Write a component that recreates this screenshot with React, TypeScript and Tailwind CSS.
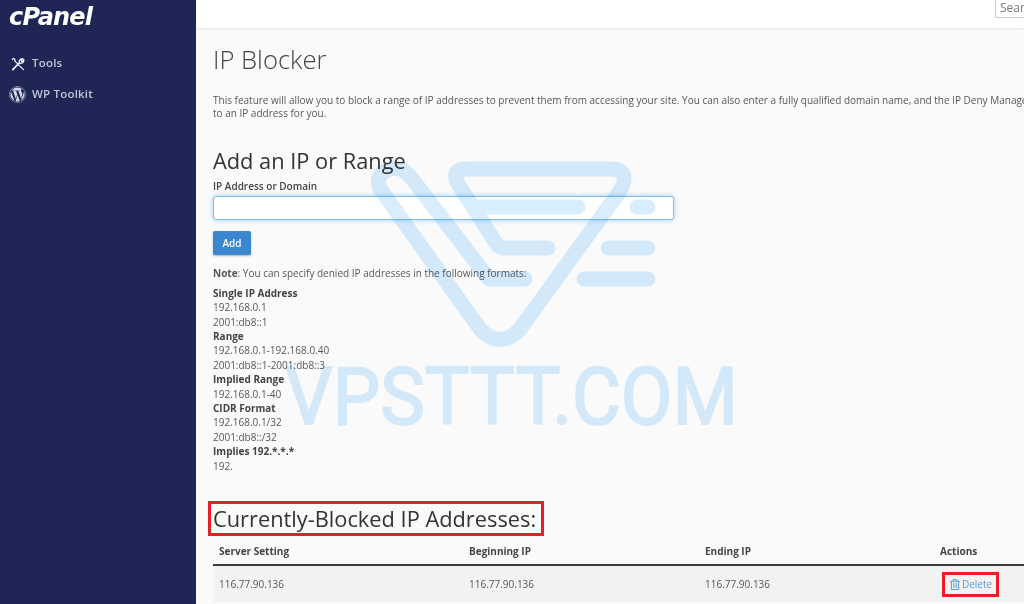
import React from "react";
import { FaWordpress, FaRegTrashAlt } from "react-icons/fa";

const ToolsIcon = () => (
  <svg viewBox="0 0 16 16" className="h-[14px] w-[14px]" fill="none" stroke="#eeeff4" strokeWidth="1.4" strokeLinecap="round" strokeLinejoin="round">
    <path d="M1.5 2.8 L2.8 1.5 L4.6 3.2 L4.2 4.4 L14.2 14.4" />
    <path d="M2 14.4 L9.6 6.8" strokeWidth="2" />
    <path d="M9.4 7 C8.6 4.4 10.6 1.4 13.6 1.8 L11.4 4.2 L12.4 5.2 L14.8 3 C15 6 12.4 8 9.6 6.8" />
  </svg>
);

const formats = [
  { title: "Single IP Address", lines: ["192.168.0.1", "2001:db8::1"] },
  { title: "Range", lines: ["192.168.0.1-192.168.0.40", "2001:db8::1-2001:db8::3"] },
  { title: "Implied Range", lines: ["192.168.0.1-40"] },
  { title: "CIDR Format", lines: ["192.168.0.1/32", "2001:db8::/32"] },
  { title: "Implies 192.*.*.*", lines: ["192."] },
];

const Watermark = () => (
  <svg
    className="pointer-events-none absolute left-0 top-0 h-[604px] w-[1024px] mix-blend-multiply"
    viewBox="0 0 1024 604"
    fill="none"
    stroke="#d8eeff"
    strokeWidth="15"
    strokeLinecap="round"
    strokeLinejoin="round"
  >
    <path d="M525 279 H489 L410 176 Q398 163 385 171 Q374 178 381 190 L480 329 Q500 350 520 329 L620 191 Q632 169 610 169 H467 Q450 169 458 184 L496 243 Q499 248 505 248 H548" />
    <path d="M473 207 H578 M637 207 H648 M608 248 H648 M584 279 H648" />
    <text
      x="285"
      y="424"
      textLength="453"
      lengthAdjust="spacingAndGlyphs"
      fontFamily="Roboto, sans-serif"
      fontSize="79"
      fill="#d8eeff"
      stroke="#d8eeff"
      strokeWidth="2"
    >
      VPSTTT.COM
    </text>
  </svg>
);

export default function App() {
  return (
    <div className="relative flex h-[604px] w-[1024px] overflow-hidden bg-[#fafafa] font-['Open_Sans',sans-serif] text-[10px] leading-[14.4px] text-[#54585c]">
      <aside className="w-[196px] shrink-0 bg-[#1f2655]">
        <div className="pl-[9px] font-['DejaVu_Sans',sans-serif] text-[24px] font-bold italic leading-[34px] tracking-[-0.8px] text-white">cPanel</div>
        <nav className="mt-[14px] text-[11.5px] font-semibold tracking-[0.2px] text-[#c3c6d6]">
          <div className="flex h-[31px] items-center gap-[7px] pl-[11px]">
            <ToolsIcon />
            <span>Tools</span>
          </div>
          <div className="flex h-[31px] items-center gap-[6px] pl-[9px]">
            <FaWordpress className="h-[17px] w-[17px] text-[#d5d7e2]" />
            <span>WP Toolkit</span>
          </div>
        </nav>
      </aside>

      <main className="min-w-0 flex-1">
        <header className="flex h-[28px] justify-end bg-white shadow-[0_1px_2px_rgba(0,0,0,0.1)]">
          <div className="h-[18px] w-[29px] rounded-bl-[3px] border-b border-l border-[#ccc] pl-[4px] text-[12px] leading-[15px] text-[#777]">
            Sear
          </div>
        </header>

        <div className="w-[1100px] pl-[17px]">
          <h1 className="mt-[14px] text-[25.6px] font-light leading-[36px] text-[#444]">IP Blocker</h1>
          <p className="mt-[16px] whitespace-nowrap leading-[13px]">
            This feature will allow you to block a range of IP addresses to prevent them from accessing your site. You can also enter a fully qualified domain name, and the IP Deny Manager will attempt to resolve it
            <br />
            to an IP address for you.
          </p>

          <h2 className="mt-[26px] text-[21.8px] font-normal leading-[30px] text-[#333]">Add an IP or Range</h2>
          <label className="mt-[3px] block font-semibold text-[#444]">IP Address or Domain</label>
          <div className="mt-[3px] h-[24px] w-[461px] rounded-[3px] border border-[#7cbff0] bg-white shadow-[0_0_5px_rgba(102,175,233,0.6)]" />
          <button className="mt-[11px] block h-[24px] w-[38px] rounded-[2px] bg-[#3a87cf] text-center text-[10px] font-semibold text-white shadow-[0_1px_2px_rgba(0,0,0,0.3)]">
            Add
          </button>

          <p className="mt-[11px]">
            <strong className="font-bold">Note</strong>: You can specify denied IP addresses in the following formats:
          </p>

          <div className="mt-[5px]">
            {formats.map((f) => (
              <div key={f.title}>
                <div className="font-bold text-[#444]">{f.title}</div>
                {f.lines.map((l) => (
                  <div key={l}>{l}</div>
                ))}
              </div>
            ))}
          </div>

          <div className="-ml-[5px] mt-[28px]">
            <h2 className="inline-block h-[35px] border-[3px] border-[#ed1c24] pl-[2px] pr-[5px] text-[21.8px] font-normal leading-[29px] text-[#333]">
              Currently-Blocked IP Addresses:
            </h2>
          </div>

          <div className="mt-[3px] flex h-[27px] items-center border-b-2 border-[#3c3c3c] pl-[6px] font-bold text-[#444]">
            <div className="w-[250px]">Server Setting</div>
            <div className="w-[236px]">Beginning IP</div>
            <div className="w-[235px]">Ending IP</div>
            <div>Actions</div>
          </div>
          <div className="flex h-[36px] items-center bg-[#f2f2f2] pl-[6px]">
            <div className="w-[250px]">116.77.90.136</div>
            <div className="w-[236px]">116.77.90.136</div>
            <div className="w-[237px]">116.77.90.136</div>
            <div className="flex h-[25px] w-[57px] items-center justify-center gap-[2px] border-[3px] border-[#ed1c24] pl-[1px] text-[#5b9bd5]">
              <FaRegTrashAlt className="h-[11px] w-[10px]" />
              Delete
            </div>
          </div>
        </div>
      </main>

      <Watermark />
    </div>
  );
}
